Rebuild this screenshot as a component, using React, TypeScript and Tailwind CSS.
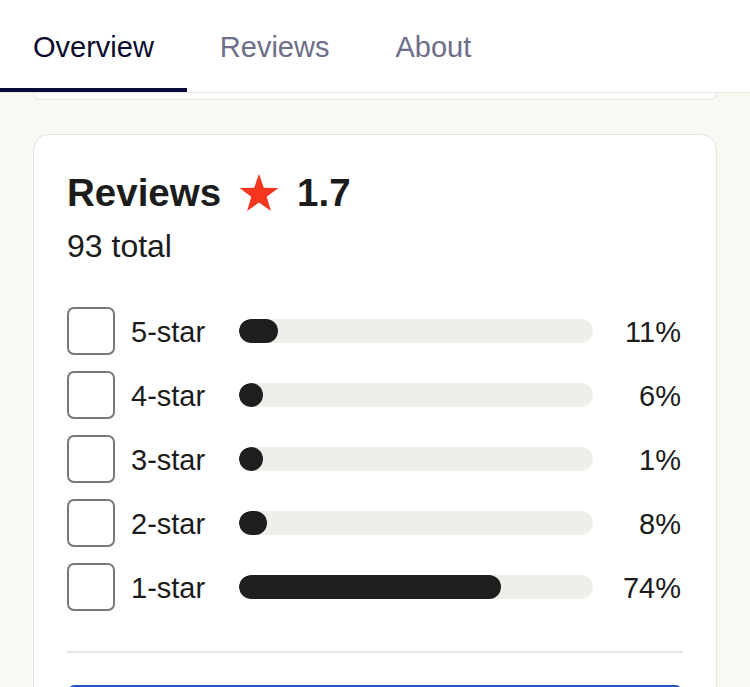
import React from "react";

type RatingRow = {
  label: string;
  percent: number;
};

const rows: RatingRow[] = [
  { label: "5-star", percent: 11 },
  { label: "4-star", percent: 6 },
  { label: "3-star", percent: 1 },
  { label: "2-star", percent: 8 },
  { label: "1-star", percent: 74 },
];

const tabs = ["Overview", "Reviews", "About"];

function StarIcon() {
  return (
    <svg viewBox="0 0 24 24" className="h-[44px] w-[44px]" aria-hidden="true">
      <polygon
        points="12,1.5 14.6,9.1 22.6,9.3 16.2,14.1 18.5,21.8 12,17.2 5.5,21.8 7.8,14.1 1.4,9.3 9.4,9.1"
        fill="#f4361f"
      />
    </svg>
  );
}

export default function App() {
  return (
    <div
      className="min-h-screen bg-[#f9f8f2] text-[#1c1c1c]"
      style={{ fontFamily: '"Liberation Sans", Arial, sans-serif' }}
    >
      <header className="flex h-[93px] border-b border-[#e7e6e1] bg-white">
        {tabs.map((tab, index) => (
          <button
            key={tab}
            className={
              index === 0
                ? "flex h-full items-center border-b-4 border-[#0b0b3b] px-[33px] pt-[7px] text-[29px] text-[#0b0b2e]"
                : "flex h-full items-center border-b-4 border-transparent px-[33px] pt-[7px] text-[29px] text-[#6e6d8a]"
            }
          >
            {tab}
          </button>
        ))}
      </header>

      <div className="mx-[33px] h-[7px] rounded-b-[12px] border-x border-b border-[#e6e4dc] bg-white" />

      <section className="mx-[33px] mt-[34px] rounded-[16px] border border-[#e6e4dc] bg-white px-[33px] pt-[36px] pb-[32px]">
        <div className="flex h-[44px] items-center gap-[16px]">
          <h2 className="text-[38.5px] font-bold leading-[44px]">Reviews</h2>
          <StarIcon />
          <span className="text-[38.5px] font-bold leading-[44px]">1.7</span>
        </div>

        <p className="mt-[13px] text-[32px] leading-[36px]">93 total</p>

        <div className="mt-[43px] flex flex-col gap-[16px]">
          {rows.map((row) => (
            <label key={row.label} className="flex h-[48px] items-center">
              <span className="h-[48px] w-[48px] shrink-0 rounded-[7px] border-2 border-[#787878] bg-white" />
              <span className="ml-[16px] w-[92px] pt-[2px] text-[29px] leading-[32px]">
                {row.label}
              </span>
              <span className="ml-[16px] h-[24px] flex-1 overflow-hidden rounded-full bg-[#f0eee8]">
                <span
                  className="block h-full min-w-[24px] rounded-full bg-[#1e1e1e]"
                  style={{ width: `${row.percent}%` }}
                />
              </span>
              <span className="w-[88px] pt-[2px] text-right text-[29px] leading-[32px]">
                {row.percent}%
              </span>
              <span className="w-[2px]" />
            </label>
          ))}
        </div>

        <div className="mt-[40px] h-[2px] bg-[#e8e6df]" />

        <button
          aria-label="Write a review"
          className="mt-[32px] h-[56px] w-full rounded-[8px] bg-[#1b58c6]"
        />
      </section>
    </div>
  );
}
